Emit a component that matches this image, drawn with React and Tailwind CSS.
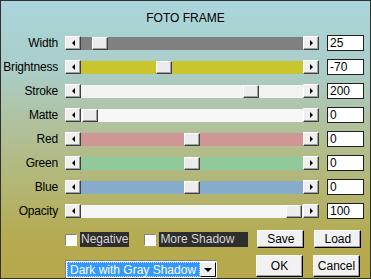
import React from "react";

const rows = [
  { label: "Width", track: "bg-[#808080]", thumb: 11, value: "25" },
  { label: "Brightness", track: "bg-[#c9c52e]", thumb: 75, value: "-70" },
  { label: "Stroke", track: "bg-[#f3f3f1]", thumb: 162, value: "200" },
  { label: "Matte", track: "bg-[#f7f7f7]", thumb: 1, value: "0" },
  { label: "Red", track: "bg-[#d09595]", thumb: 103, value: "0" },
  { label: "Green", track: "bg-[#90c99b]", thumb: 103, value: "0" },
  { label: "Blue", track: "bg-[#86abcb]", thumb: 103, value: "0" },
  { label: "Opacity", track: "bg-[#f6f6f6]", thumb: 205, value: "100" },
];

function ArrowBtn({ dir }) {
  return (
    <div className="w-4 h-[14px] shrink-0 bg-[#efefef] border-t border-l border-white border-b border-r border-b-[#404040] border-r-[#404040] flex items-center justify-center shadow-[inset_-1px_-1px_0_#a0a0a0]">
      {dir === "left" ? (
        <div className="w-0 h-0 border-y-[3px] border-y-transparent border-r-[3px] border-r-black" />
      ) : (
        <div className="w-0 h-0 border-y-[3px] border-y-transparent border-l-[3px] border-l-black" />
      )}
    </div>
  );
}

function Row({ r }) {
  return (
    <div className="flex items-center h-6">
      <div className="w-[57px] text-right text-[12px] tracking-[-0.2px] text-black leading-none">{r.label}</div>
      <div className="ml-[7px] flex items-center w-[254px] h-[14px]">
        <ArrowBtn dir="left" />
        <div className={`relative flex-1 h-[13px] ${r.track}`}>
          <div
            className="absolute top-0 w-4 h-[13px] bg-[#ececec] border-t border-l border-white border-b border-r border-b-[#404040] border-r-[#404040] shadow-[inset_-1px_-1px_0_#a0a0a0]"
            style={{ left: r.thumb }}
          />
        </div>
        <ArrowBtn dir="right" />
      </div>
      <div className="ml-[8px] w-[37px] h-4 bg-white border border-[#202020] text-[12px] leading-[14px] pl-[2px] text-black">
        {r.value}
      </div>
    </div>
  );
}

function Btn({ children, h }) {
  return (
    <div
      className={`w-[47px] ${h} bg-[#f1f1f1] border-t border-l border-white border-b border-r border-b-black border-r-black shadow-[inset_-1px_-1px_0_#a0a0a0] flex items-center justify-center text-[12px] text-black`}
    >
      {children}
    </div>
  );
}

export default function App() {
  return (
    <div
      className="w-[371px] h-[279px] border border-[#303030] overflow-hidden bg-[linear-gradient(to_bottom,#a9d6dc_0%,#aacdc8_25%,#b0c19c_45%,#b3b777_65%,#b5ab52_85%,#b6a84a_100%)]"
      style={{ fontFamily: '"Liberation Sans", Arial, sans-serif' }}
    >
      <div className="h-[30px] flex items-center justify-center pt-[4px] text-[12px] text-black">FOTO FRAME</div>
      <div className="flex flex-col">
        {rows.map((r) => (
          <Row key={r.label} r={r} />
        ))}
      </div>
      <div className="flex items-start mt-[7px] h-[18px]">
        <div className="ml-[64px] mt-[2px] flex items-center">
          <div className="w-3 h-3 bg-white border-t border-l border-[#808080] border-b border-r border-b-white border-r-white" />
          <div className="ml-[3px] bg-[#2e2e2e] text-[#d6d6d6] text-[12px] leading-[15px] px-[1px]">Negative</div>
        </div>
        <div className="ml-[15px] mt-[2px] flex items-center">
          <div className="w-3 h-3 bg-white border-t border-l border-[#808080] border-b border-r border-b-white border-r-white" />
          <div className="ml-[3px] w-[89px] bg-[#2e2e2e] text-[#d6d6d6] text-[12px] leading-[15px] px-[1px]">More Shadow</div>
        </div>
        <div className="ml-[9px] flex gap-[10px]">
          <Btn h="h-[18px]">Save</Btn>
          <Btn h="h-[18px]">Load</Btn>
        </div>
      </div>
      <div className="flex items-start mt-[7px]">
        <div className="ml-[64px] mt-[5px] w-[152px] h-[18px] bg-white border-t border-l border-[#808080] flex p-[1px]">
          <div className="flex-1 bg-[#3399ff] text-white text-[12px] leading-[14px] pl-[2px] border border-dotted border-[#c0dcff]">
            Dark with Gray Shadow
          </div>
          <div className="w-4 h-[15px] bg-[#efefef] border-t border-l border-white border-b border-r border-b-black border-r-black flex items-center justify-center">
            <div className="w-0 h-0 border-x-[4px] border-x-transparent border-t-[4px] border-t-black" />
          </div>
        </div>
        <div className="ml-[39px] flex gap-[10px]">
          <Btn h="h-[22px]">OK</Btn>
          <Btn h="h-[22px]">Cancel</Btn>
        </div>
      </div>
    </div>
  );
}
